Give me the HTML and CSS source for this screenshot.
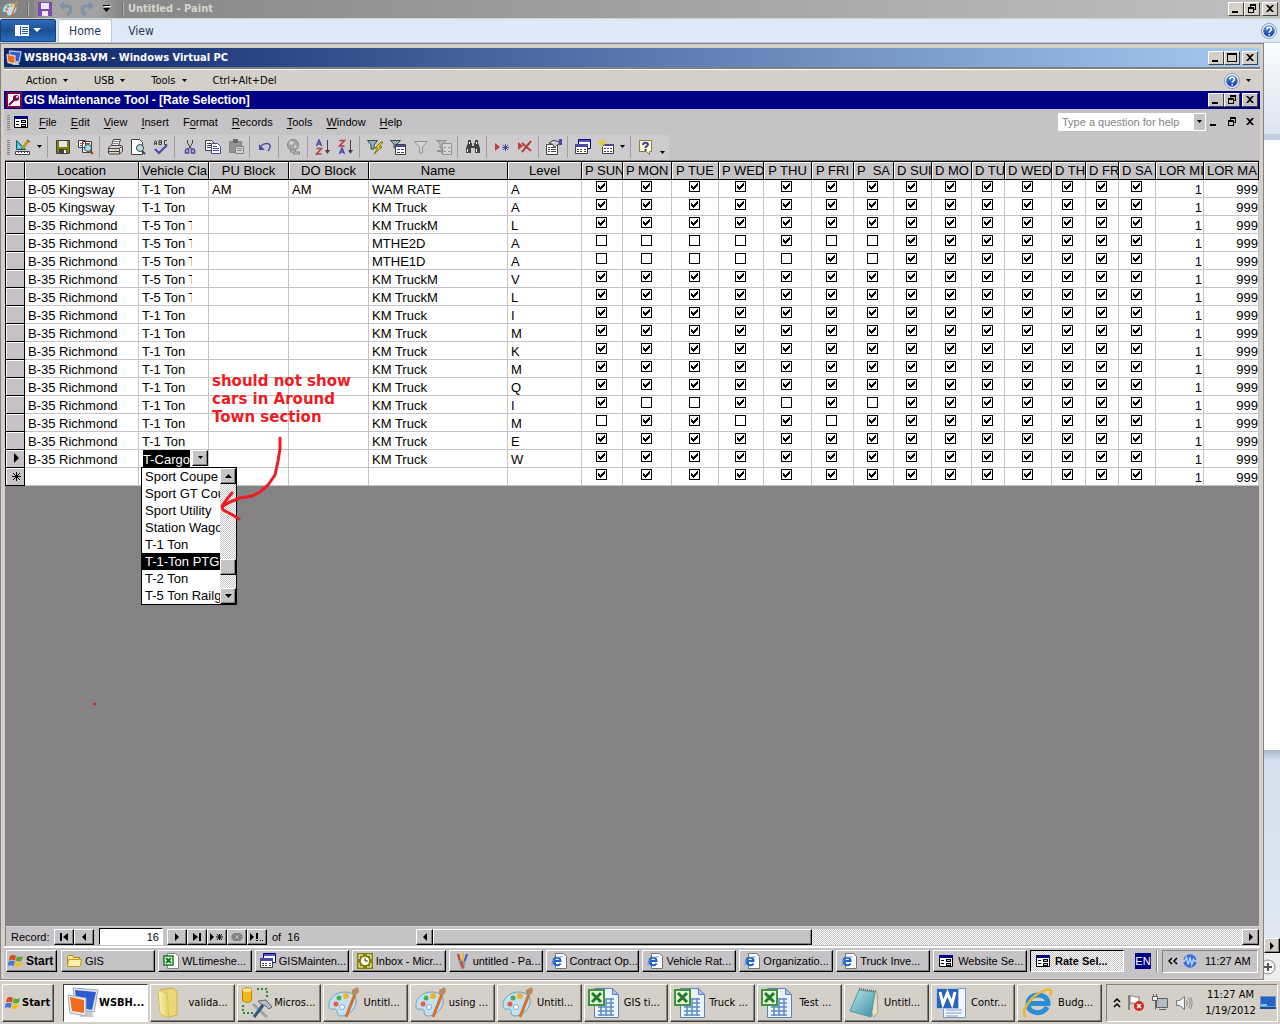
FILE: index.html
```html
<!DOCTYPE html>
<html lang="en">
<head>
<meta charset="utf-8">
<title>Untitled - Paint</title>
<link rel="stylesheet" href="styles.css">
</head>
<body>
<svg class="sprite" aria-hidden="true">
  <defs>
    <linearGradient id="gblue" x1="0" y1="0" x2="0" y2="1"><stop offset="0" stop-color="#5a92e8"/><stop offset="1" stop-color="#1238a0"/></linearGradient>
    <linearGradient id="gfold" x1="0" y1="0" x2="1" y2="0"><stop offset="0" stop-color="#fdf3b8"/><stop offset="1" stop-color="#e6cc62"/></linearGradient>
    <linearGradient id="gnote" x1="0" y1="0" x2="1" y2="1"><stop offset="0" stop-color="#b9e6ea"/><stop offset="1" stop-color="#3b8fa2"/></linearGradient>
  </defs>
  <symbol id="i-min" viewBox="0 0 12 10"><path d="M2 7h6v2H2z"/></symbol>
  <symbol id="i-max" viewBox="0 0 12 10"><path fill-rule="evenodd" d="M1 0h10v9H1zM2 2v6h8V2z"/></symbol>
  <symbol id="i-res" viewBox="0 0 12 10"><path fill-rule="evenodd" d="M4 0h6v6H8v3H2V3h2zM5 2v1h3v2h1V2zM3 5v3h4V5z"/></symbol>
  <symbol id="i-x" viewBox="0 0 12 10"><path d="M2 1h2l2 2 2-2h2L7 4.500l3 3.500H8L6 6 4 8H2l3-3.500z"/></symbol>
  <symbol id="i-down" viewBox="0 0 7 4"><path d="M1 0h5L3.500 3z"/></symbol>
  <symbol id="i-tri" viewBox="0 0 7 4"><path d="M0 0h7L3.500 4z"/></symbol>
  <symbol id="i-left" viewBox="0 0 8 8"><path d="M6 0v8L2 4z"/></symbol>
  <symbol id="i-right" viewBox="0 0 8 8"><path d="M2 0v8l4-4z"/></symbol>
  <symbol id="i-first" viewBox="0 0 12 8"><path d="M2 0h2v8H2zM10 0v8L5 4z"/></symbol>
  <symbol id="i-last" viewBox="0 0 12 8"><path d="M2 0v8l5-4zM8 0h2v8H8z"/></symbol>
  <symbol id="i-new" viewBox="0 0 14 8"><path d="M0 0v8l4-4zM6 3.500h7v1H6zM9 1h1v6H9z"/><path d="M7 1l5 6M12 1L7 7" stroke="#000"/></symbol>
  <symbol id="i-stop" viewBox="0 0 14 10"><path fill="#848284" d="M3 0h8l3 3v4l-3 3H3L0 7V3z"/><path stroke="#d6d3d6" d="M5 3l4 4M9 3L5 7" fill="none"/></symbol>
  <symbol id="i-run" viewBox="0 0 14 8"><path d="M0 0v8l4-4zM6 0h2v6H6zM6 7h2v1H6zM10 7h1v1h-1zM12 7h1v1h-1z"/></symbol>
  <symbol id="i-help" viewBox="0 0 16 16"><circle cx="8" cy="8" r="7.500" fill="#f2f4f8" stroke="#8b97b5"/><circle cx="8" cy="8" r="5.800" fill="url(#gblue)"/><path d="M5.800 6.500c0-3 4.600-3 4.600-.2 0 1.600-2.200 1.600-2.200 3.400M8.200 11v1.400" fill="none" stroke="#fff" stroke-width="1.600"/></symbol>
  <symbol id="i-palette" viewBox="0 0 32 32"><path d="M2 20C1 11 9 5 18 5c8 0 12 5 11 11-1 7-8 13-15 13-6 0-2-6-6-7-3 0-5 1-6-2z" fill="#c3e0f3" stroke="#6ba3c9"/><circle cx="9" cy="17" r="2.500" fill="#e85c3c"/><circle cx="12" cy="11" r="2.500" fill="#4eae4a"/><circle cx="19" cy="9" r="3" fill="#f3b32a"/><circle cx="15" cy="20" r="2.500" fill="#fff" stroke="#76a9d0"/><path d="M28 7l-9 23" stroke="#d8702a" stroke-width="3"/><path d="M25 3l6-3 1 5-4 4-3-2z" fill="#b78b5e"/></symbol>
  <symbol id="i-vpc" viewBox="0 0 32 32"><path d="M13 30h14l-3-6h-8z" fill="#c8ccd2"/><path d="M6 1l25 2-4 22-18-3z" fill="#e5e9f0" stroke="#9ba4b4"/><path d="M8 3l21 2-4 18-15-3z" fill="#2d5bd0"/><path d="M1 8l18 3v18L3 26z" fill="#e9edf2" stroke="#a2a6ae"/><path d="M3 10l14 3v13L5 24z" fill="#ee6b1b"/></symbol>
  <symbol id="i-key" viewBox="0 0 16 16"><path fill="#fff" stroke="#840042" stroke-width="2" d="M1 1h14v14H1z"/><path d="M3 13l6-6" stroke="#840042" stroke-width="2"/><circle cx="10" cy="6" r="3" fill="#840042"/><circle cx="11" cy="5" r="1" fill="#fff"/></symbol>
  <symbol id="i-form" viewBox="0 0 14 12"><path fill="#fff" stroke="#000" d="M.5.500h13v11H.5z"/><path fill="#000084" d="M0 0h14v3H0z"/><path d="M2 5h3v1H2zM2 8h3v1H2zM7 4h5v3H7zM7 8h5v3H7z"/><path fill="#c6c3c6" d="M8 5h3v1H8zM8 9h3v1H8z"/></symbol>
  <symbol id="i-design" viewBox="0 0 16 16"><path fill="#42c3d6" stroke="#085a6b" d="M1.500 1.500v9h9z"/><path fill="#c6c3c6" d="M3 6v3h3z"/><path fill="#fff" stroke="#424142" d="M.5 12.500h14v3H.5z"/><path stroke="#424142" d="M3.500 12v2M6.500 12v2M9.500 12v2M12.500 12v2"/><path stroke="#c39a10" stroke-width="3" d="M13 2L8 9"/><path stroke="#423010" d="M12 1l3 2M7 9l-.5 2"/></symbol>
  <symbol id="i-save" viewBox="0 0 16 16"><path fill="#848200" stroke="#424142" d="M1.500 1.500h13v13h-13z"/><path fill="#e7e3e7" d="M4 2h8v6H4z"/><path fill="#424142" d="M4 10h8v4H4z"/><path fill="#fff" d="M9 11h2v3H9z"/></symbol>
  <symbol id="i-find" viewBox="0 0 16 16"><path fill="#fff" stroke="#424142" d="M4.500 2.500h9v11h-9zM.5 1.500h7v7h-7z"/><path stroke="#c34a4a" d="M2 4.500h4M8 4.500h4"/><path stroke="#4a4aa5" d="M2 6.500h3"/><circle cx="10" cy="9" r="3.500" fill="#9ce3ef" stroke="#424142"/><path stroke="#a54100" stroke-width="2" d="M12 12l3 3"/></symbol>
  <symbol id="i-print" viewBox="0 0 16 16"><path fill="#fff" stroke="#424142" d="M6.500.500h7l-2 6h-7z"/><path stroke="#848284" d="M7 2.500h5M6 4.500h5"/><path fill="#ded7de" stroke="#424142" d="M1.500 8.500l3-2h10l1 1v5l-3 2.500h-10l-1-1z"/><path stroke="#424142" fill="none" d="M1 9.500h11l3-2M1 12.500h11M12.500 10v5"/><path stroke="#dcd000" d="M7 11.500h3"/></symbol>
  <symbol id="i-preview" viewBox="0 0 16 16"><path fill="#fff" stroke="#424142" d="M1.500.500h8l3 3v12h-11z"/><circle cx="10" cy="9" r="3.500" fill="#b5e3ea" stroke="#424142"/><path stroke="#424142" stroke-width="2" d="M12 12l3 3"/></symbol>
  <symbol id="i-spell" viewBox="0 0 16 16"><path fill="none" stroke="#424142" d="M1.500 6V3l1-1.500 1 1.500v3M1.500 4.500h2M6 1.500v4h2.500v-4zM6 3.500h2M14 1.500h-2.500v4H14"/><path d="M2 10l4 4 8-8" fill="none" stroke="#4a4aa5" stroke-width="2"/></symbol>
  <symbol id="i-cut" viewBox="0 0 16 16"><path d="M5.500 1v3l4 6M10.500 1v3l-4 6" fill="none" stroke="#424142"/><path fill="none" stroke="#4a4aa5" stroke-width="1.500" d="M4.500 10h2v4h-3v-3zM9.500 10h2l1 1v3h-3z"/></symbol>
  <symbol id="i-copy" viewBox="0 0 16 16"><path fill="#fff" stroke="#424142" d="M.5 1.500h6l3 3v7h-9z"/><path stroke="#424142" d="M2 4.500h4M2 6.500h4M2 8.500h4"/><path fill="#fff" stroke="#4a4aa5" d="M6.500 4.500h6l3 3v7h-9z"/><path stroke="#4a4aa5" d="M8 7.500h4M8 9.500h6M8 11.500h6"/></symbol>
  <symbol id="i-paste" viewBox="0 0 16 16"><path fill="#949294" stroke="#848284" d="M1.500 2.500h12v11h-12z"/><path fill="#6b696b" d="M5 0h5v4H5z"/><path fill="#d6d3d6" stroke="#848284" d="M7.500 7.500h8v7h-8z"/><path stroke="#848284" d="M9 9.500h5M9 11.500h5"/></symbol>
  <symbol id="i-undo" viewBox="0 0 16 16"><path fill="none" stroke="#4a4aa5" stroke-width="1.500" d="M4 7c4-4 10-3 9 1 0 2-1 3-2 4"/><path fill="#4a4aa5" d="M2 5v6h6z"/></symbol>
  <symbol id="i-globe" viewBox="0 0 16 16"><circle cx="7" cy="6" r="5.500" fill="#a5a2a5" stroke="#848284"/><path fill="#d6d3d6" d="M4 2l4 1-2 3-3-1zM8 6l3 1-2 3z"/><path d="M4 12h6M7 14h7" stroke="#848284" stroke-width="3"/><path d="M5 12h4M8 14h5" stroke="#d6d3d6"/></symbol>
  <symbol id="i-az" viewBox="0 0 16 16"><path fill="none" stroke="#4a4aa5" stroke-width="1.500" d="M1.500 7l2.500-6 2.500 6M2.500 5h3"/><path fill="none" stroke="#b54142" stroke-width="1.500" d="M1.500 9.500h5l-5 5.500h5"/><path d="M12.500 1v12" stroke="#424142"/><path fill="#424142" d="M10 11h5l-2.500 4z"/></symbol>
  <symbol id="i-za" viewBox="0 0 16 16"><path fill="none" stroke="#4a4aa5" stroke-width="1.500" d="M1.500 15l2.500-6 2.500 6M2.500 13h3"/><path fill="none" stroke="#b54142" stroke-width="1.500" d="M1.500 1.500h5l-5 5.500h5"/><path d="M12.500 1v12" stroke="#424142"/><path fill="#424142" d="M10 11h5l-2.500 4z"/></symbol>
  <symbol id="i-funnel" viewBox="0 0 16 16"><path fill="#d6d3d6" stroke="#949294" d="M1.500 2.500h13L9.500 8v6h-3V8z"/></symbol>
  <symbol id="i-fbolt" viewBox="0 0 16 16"><path fill="#8cb6bd" stroke="#424142" d="M.5 1.500h10L7 6v4H4V6z"/><path fill="#efe321" stroke="#737100" d="M14 3l-6 6h3l-4 6 8-7h-3l4-5z"/></symbol>
  <symbol id="i-fform" viewBox="0 0 16 16"><path fill="#8cb6bd" stroke="#424142" d="M.5 1.500h10L7 5v4H4V5z"/><path fill="#fff" stroke="#424142" d="M5.500 5.500h10v10h-10z"/><path fill="#4a4aa5" d="M6 6h9v2H6z"/><path stroke="#424142" d="M7 10.500h3M7 13.500h3M11 10.500h3M11 13.500h3"/></symbol>
  <symbol id="i-fgray" viewBox="0 0 16 16"><path fill="#b5b2b5" stroke="#949294" d="M.5 1.500h10L7 5v4H4V5z"/><path fill="#d6d3d6" stroke="#949294" d="M6.500 4.500h9v11h-9z"/><path stroke="#949294" d="M8 8.500h2M8 12.500h2M12 8.500h2M12 12.500h2"/><path fill="#949294" d="M1 11h4V9l3 3-3 3v-2H1z"/></symbol>
  <symbol id="i-bino" viewBox="0 0 16 16"><path fill="#424142" d="M3 1h3v3h1v3h2V4h1V1h3v3l2 5v5h-5V9H6v5H1V9l2-5z"/><path fill="#fff" d="M4 3h1v2H4zM11 3h1v2h-1zM2 10h1v3H2zM11 10h1v3h-1z"/></symbol>
  <symbol id="i-newrec" viewBox="0 0 16 16"><path fill="#b54142" d="M1 4v8l5-4z"/><path stroke="#4a4aa5" d="M8 8.500h7M11.500 5v7M9 6l5 5M14 6l-5 5"/></symbol>
  <symbol id="i-delrec" viewBox="0 0 16 16"><path fill="#b54142" d="M1 3v8l5-4z"/><path stroke="#b54142" stroke-width="2" d="M14 2L5 13M5 4l9 8"/></symbol>
  <symbol id="i-props" viewBox="0 0 16 16"><path fill="#fff" stroke="#424142" d="M.5 5.500h11v10H.5z"/><path stroke="#424142" d="M2 8.500h2M5 8.500h5M2 10.500h2M5 10.500h5M2 12.500h2M5 12.500h5"/><path fill="#d6d3d6" stroke="#424142" d="M3 4l4-2.500 6 1v3l-3 1-2 2-1-3z"/><path fill="#4a4aa5" d="M13 0h3v6h-3z"/></symbol>
  <symbol id="i-db" viewBox="0 0 16 16"><path fill="#fff" stroke="#000084" d="M3.500.500h12v9h-12z"/><path fill="#5a5ab5" d="M4 1h11v2H4z"/><path fill="#fff" stroke="#424142" d="M.5 5.500h12v9H.5z"/><path fill="#4a4aa5" d="M0 5h13v3H0z"/><path stroke="#424142" d="M2 10.500h2M5 10.500h2M9 10.500h2M2 12.500h2M5 12.500h2M9 12.500h2"/></symbol>
  <symbol id="i-newobj" viewBox="0 0 16 16"><path fill="#fff" stroke="#424142" d="M4.500 5.500h11v9h-11z"/><path fill="#4a4aa5" d="M5 5h11v2H5z"/><path stroke="#424142" d="M6 9.500h2M9 9.500h2M12 9.500h2M6 12.500h2M9 12.500h2M12 12.500h2"/><path stroke="#dfcf10" d="M4.500 0v8M0 4.500h8M1 1l6 6M7 1L1 7"/></symbol>
  <symbol id="i-q" viewBox="0 0 16 16"><path fill="#ffffce" stroke="#848242" d="M1.500 1.500h12v11h-2v3l-3-3h-7z"/><path fill="none" stroke="#3a3ab0" stroke-width="2" d="M5 6c0-3 5-3 5-.5C10 7 7.500 7 7.500 9M7.500 10v2"/></symbol>
  <symbol id="i-flag" viewBox="0 0 16 16"><path fill="#e04a20" d="M2 3c2-1.500 4-1.500 6 0L7 7.500c-2-1-4-1-6 0z"/><path fill="#56ab35" d="M9 3.300c2 1 4 1 6-.3l-1.200 4.500c-2 1.200-4 1-6 .2z"/><path fill="#3a7ade" d="M.8 8.500c2-1.200 4-1 6 0L5.500 13c-2-1-4-1-6 0z"/><path fill="#f6bd1b" d="M7.600 8.800c2 1 4 1 6 0l-1.200 4.400c-2 1.200-4 1-6 .1z"/></symbol>
  <symbol id="i-folder" viewBox="0 0 16 16"><path fill="#fbe48b" stroke="#b8860b" d="M1.500 3.500l1-1h4l1 2h6v9h-12z"/><path fill="#fdf0a8" stroke="#c9991c" d="M1.500 13.500l1-7h13l-1.500 7z"/></symbol>
  <symbol id="i-xls" viewBox="0 0 16 16"><path fill="#fff" stroke="#848284" d="M4.500.500h8l3 3v12h-11z"/><path fill="#fff" stroke="#0c7c1c" stroke-width="1.500" d="M1 3h9v9H1z"/><path stroke="#0c7c1c" stroke-width="2" d="M3 5l5 5M8 5l-5 5"/></symbol>
  <symbol id="i-outlook" viewBox="0 0 16 16"><path fill="#848200" d="M0 0h16v16H0z"/><path fill="none" stroke="#fff" d="M2 6V2h4M10 2h4v4M14 10v4h-4M6 14H2v-4"/><circle cx="8" cy="8" r="4" fill="#fff"/><path stroke="#424100" fill="none" d="M8 5v3h3"/></symbol>
  <symbol id="i-brushes" viewBox="0 0 16 16"><path stroke="#c33b21" stroke-width="2" d="M4 1l3 11"/><path stroke="#3656c8" stroke-width="2" d="M13 1l-4 12"/><path stroke="#f0b719" stroke-width="2" d="M9 0L8 12"/><path fill="#8aa6a0" d="M4 7l8 1-2 8H7z"/><path stroke="#e23a2a" stroke-width="2" d="M7 8l2 7"/></symbol>
  <symbol id="i-iepage" viewBox="0 0 16 16"><path fill="#fff" stroke="#737573" d="M4.500.500h8l3 3v12h-11z"/><path fill="none" stroke="#1c63cf" stroke-width="2" d="M9.500 10.500c-1.500 3-7 2-7-2.500s7-4.500 7 0H3"/><path fill="none" stroke="#5aa0ea" d="M1 13C0 9 6 3 11 4"/></symbol>
  <symbol id="i-folderbig" viewBox="0 0 32 32"><path fill="#edd676" stroke="#c9ad4e" d="M6 3l12-2 5 3v24l-8 2z"/><path fill="url(#gfold)" stroke="#d8bf62" d="M4 3l9 3 2 25-9-4z"/></symbol>
  <symbol id="i-tools" viewBox="0 0 32 32"><path fill="#f2b91c" stroke="#b78208" d="M1.500 3c0-3 9-3 9 0v10c0 3-9 3-9 0z"/><ellipse cx="6" cy="3" rx="4.500" ry="1.800" fill="#fbe79a"/><path fill="none" stroke="#2c8a34" stroke-width="2" stroke-dasharray="2 2" d="M16 2h10v10M2 18v8h12"/><path stroke="#9aa3ad" stroke-width="3" d="M12 17l14 13"/><path stroke="#31567f" stroke-width="3" d="M22 18L13 30"/><path fill="#b7bec7" stroke="#5c646e" d="M17 14l8-1 6 7-3 2-3-3-5-2z"/></symbol>
  <symbol id="i-xlbig" viewBox="0 0 32 32"><path fill="#eaf2fc" stroke="#5d82b8" d="M6.500 1.500h18l6 6v23h-24z"/><path fill="#a8c4ea" stroke="#5d82b8" d="M24.500 1.500v6h6z"/><path stroke="#5d8bc8" stroke-width="1.500" fill="none" d="M10 20h16M10 24h16M10 28h16M13 17v12M18 11v18M23 11v18M18 12h8M18 16h8"/><path fill="#e5f2df" stroke="#3f9637" stroke-width="2" d="M1 3h15v15H1z"/><path stroke="#247a26" stroke-width="3" d="M4 6l9 9M13 6l-9 9"/></symbol>
  <symbol id="i-notebig" viewBox="0 0 32 32"><path fill="#e9e2c0" stroke="#a8a284" d="M11 3l18 2 1 20-4 5z"/><path fill="url(#gnote)" stroke="#4d99a8" d="M11 3l16 2-4 25-21-6z"/><path stroke="#6c7478" stroke-dasharray="1 1" stroke-width="2" d="M11 2l17 2"/></symbol>
  <symbol id="i-wordbig" viewBox="0 0 32 32"><path fill="#f4f8fd" stroke="#7a97c5" d="M8.500 1.500h22v29h-22z"/><path stroke="#9fb7da" stroke-width="1.500" d="M11 23h16M11 26h16M11 29h12"/><path fill="#2b63ba" stroke="#a9c5ee" d="M1.500 1.500h22v20h-22z"/><path fill="none" stroke="#fff" stroke-width="3" d="M5 5l3 12 4.500-11L17 17l3-12"/></symbol>
  <symbol id="i-iebig" viewBox="0 0 32 32"><path fill="none" stroke="#2a8ed2" stroke-width="5" d="M26 20c-3 8-19 8-19-3 0-12 20-12 20-.5H8"/><path fill="none" stroke="#f0b52b" stroke-width="2.500" d="M5 30c-6-4 3-19 15-25 9-5 12-2 9 4"/></symbol>
  <symbol id="i-up2" viewBox="0 0 8 12"><path fill="none" stroke="#000" stroke-width="1.500" d="M1 5l3-3 3 3M1 10l3-3 3 3"/></symbol>
  <symbol id="i-lt2" viewBox="0 0 10 8"><path fill="none" stroke="#000" stroke-width="1.500" d="M4 1L1 4l3 3M9 1L6 4l3 3"/></symbol>
  <symbol id="i-wave" viewBox="0 0 18 16"><circle cx="9" cy="8" r="7.500" fill="#3e6de0"/><path fill="none" stroke="#b9dcff" stroke-width="1.500" d="M0 8h3l2-4 2 8 2-8 2 8 2-6 1 2h4"/></symbol>
  <symbol id="i-actflag" viewBox="0 0 18 18"><path stroke="#6b6b6b" stroke-width="1.500" d="M2 1v15"/><path fill="#fff" stroke="#777" d="M3 2.500c3-2 5 2 9 0v7c-4 2-6-2-9 0z"/><circle cx="12" cy="12" r="5" fill="#d9291f"/><path stroke="#fff" stroke-width="1.500" d="M10 10l4 4M14 10l-4 4"/></symbol>
  <symbol id="i-net" viewBox="0 0 18 18"><path fill="#b8bcc2" stroke="#5f6265" d="M5.500 4.500h11v9h-11z"/><path fill="#eceded" stroke="#5f6265" d="M1.500 2.500h5v4h-5z"/><path stroke="#5f6265" d="M2.500 0v3M5.500 0v3M4.500 7v8.500M8 15.500h7"/></symbol>
  <symbol id="i-sound" viewBox="0 0 18 18"><path fill="#f0f0f0" stroke="#777" d="M1.500 6.500h3l5-4v13l-5-4h-3z"/><path fill="none" stroke="#888" d="M11.500 6c1 2 1 4 0 6M13.500 4c2 3 2 7 0 10M15.500 3c2 4 2 8 0 12"/></symbol>
  <symbol id="i-desk" viewBox="0 0 16 14"><path fill="#2762c4" stroke="#6f94c8" d="M.5.500h15v10H.5z"/><path fill="#7cc7ef" d="M1 8h6v2H1z"/><path fill="#1f4d90" d="M0 11h16v2H0z"/></symbol>
</svg>

<header class="paint-title">
  <svg class="ic16"><use href="#i-palette"/></svg>
  <i class="pt-sep"></i>
  <div class="quick">
  <button aria-label="Save"><svg viewBox="0 0 16 16" class="ic16"><path fill="#7a4bb0" d="M1 1h14v14H1z"/><path fill="#efe9f8" d="M4 2h8v6H4zM5 10h6v5H5z"/></svg></button>
  <button aria-label="Undo"><svg viewBox="0 0 16 16" class="ic16"><path fill="none" stroke="#7f90a8" stroke-width="3" d="M4 5h5c5 0 5 6 0 9"/><path fill="#7f90a8" d="M6 0v9L1 5z"/></svg></button>
  <button aria-label="Redo"><svg viewBox="0 0 16 16" class="ic16"><path fill="none" stroke="#7f90a8" stroke-width="3" d="M12 5H7c-5 0-5 6 0 9"/><path fill="#7f90a8" d="M10 0v9l5-4z"/></svg></button>
  <button aria-label="Customize"><svg viewBox="0 0 9 8" class="ic9"><path fill="#fff" d="M1 1h7v1H1z"/><path d="M0 0h7v1H0zM0 3h7L3.500 7z"/></svg></button>
  </div>
  <i class="pt-sep tight"></i>
  <h1>Untitled - Paint</h1>
  <div class="wbtns"><button aria-label="Minimize"><svg><use href="#i-min"/></svg></button><button aria-label="Restore"><svg><use href="#i-res"/></svg></button><button class="gap" aria-label="Close"><svg><use href="#i-x"/></svg></button></div>
</header>
<nav class="ribbon">
  <button class="appbtn" aria-label="Paint menu"><svg viewBox="0 0 26 12"><path fill="#fff" d="M0 0h14v11H0z"/><path fill="#2a5fa8" d="M5 1h1v9H5zM7 2h6v1H7zM7 4h6v1H7zM7 6h6v1H7zM7 8h6v1H7z"/><path fill="#fff" d="M18 3h8l-4 4z"/></svg></button>
  <button class="tab on">Home</button>
  <button class="tab">View</button>
  <button class="rhelp" aria-label="Help"><svg class="ic16"><use href="#i-help"/></svg></button>
</nav>

<div class="work">
<main class="vm">
  <div class="vm-title">
    <svg class="ic16"><use href="#i-vpc"/></svg><h2>WSBHQ438-VM - Windows Virtual PC</h2>
    <div class="wbtns"><button aria-label="Minimize"><svg><use href="#i-min"/></svg></button><button aria-label="Maximize"><svg><use href="#i-max"/></svg></button><button class="gap" aria-label="Close"><svg><use href="#i-x"/></svg></button></div>
  </div>
  <div class="vm-menu">
    <button>Action<svg class="dn"><use href="#i-down"/></svg></button><button>USB<svg class="dn"><use href="#i-down"/></svg></button><button>Tools<svg class="dn"><use href="#i-down"/></svg></button><button>Ctrl+Alt+Del</button>
    <button class="push" aria-label="Help"><svg class="ic16"><use href="#i-help"/></svg><svg class="dn"><use href="#i-down"/></svg></button>
  </div>
  <div class="app-title">
    <svg class="ic16"><use href="#i-key"/></svg><h2>GIS Maintenance Tool - [Rate Selection]</h2>
    <div class="wbtns guest"><button aria-label="Minimize"><svg><use href="#i-min"/></svg></button><button aria-label="Restore"><svg><use href="#i-res"/></svg></button><button class="gap" aria-label="Close"><svg><use href="#i-x"/></svg></button></div>
  </div>
  <div class="menu">
    <i class="grip"></i><svg class="ficon"><use href="#i-form"/></svg>
    <button><u>F</u>ile</button><button><u>E</u>dit</button><button><u>V</u>iew</button><button><u>I</u>nsert</button><button>F<u>o</u>rmat</button><button><u>R</u>ecords</button><button><u>T</u>ools</button><button><u>W</u>indow</button><button><u>H</u>elp</button>
    <div class="ask"><input type="text" aria-label="Type a question for help" placeholder="Type a question for help"><button aria-label="Recent questions"><svg class="dn"><use href="#i-down"/></svg></button></div>
    <div class="mdi"><button aria-label="Minimize form"><svg><use href="#i-min"/></svg></button><button aria-label="Restore form"><svg><use href="#i-res"/></svg></button><button aria-label="Close form"><svg><use href="#i-x"/></svg></button></div>
  </div>
  <div class="tools">
    <i class="grip"></i>
    <button aria-label="Design view"><svg><use href="#i-design"/></svg></button><button class="thin" aria-label="Views"><svg class="dn"><use href="#i-down"/></svg></button><i></i>
    <button aria-label="Save"><svg><use href="#i-save"/></svg></button><button aria-label="File search"><svg><use href="#i-find"/></svg></button><i></i>
    <button aria-label="Print"><svg><use href="#i-print"/></svg></button><button aria-label="Print preview"><svg><use href="#i-preview"/></svg></button><button aria-label="Spelling"><svg><use href="#i-spell"/></svg></button><i></i>
    <button aria-label="Cut"><svg><use href="#i-cut"/></svg></button><button aria-label="Copy"><svg><use href="#i-copy"/></svg></button><button aria-label="Paste"><svg><use href="#i-paste"/></svg></button><i></i>
    <button aria-label="Undo"><svg><use href="#i-undo"/></svg></button><i></i>
    <button aria-label="Insert hyperlink"><svg><use href="#i-globe"/></svg></button><i></i>
    <button aria-label="Sort ascending"><svg><use href="#i-az"/></svg></button><button aria-label="Sort descending"><svg><use href="#i-za"/></svg></button><i></i>
    <button aria-label="Filter by selection"><svg><use href="#i-fbolt"/></svg></button><button aria-label="Filter by form"><svg><use href="#i-fform"/></svg></button><button aria-label="Apply filter"><svg><use href="#i-funnel"/></svg></button><button aria-label="Toggle filter"><svg><use href="#i-fgray"/></svg></button><i></i>
    <button aria-label="Find"><svg><use href="#i-bino"/></svg></button><i></i>
    <button aria-label="New record"><svg><use href="#i-newrec"/></svg></button><button aria-label="Delete record"><svg><use href="#i-delrec"/></svg></button><i></i>
    <button aria-label="Properties"><svg><use href="#i-props"/></svg></button><i></i>
    <button aria-label="Database window"><svg><use href="#i-db"/></svg></button><button aria-label="New object"><svg><use href="#i-newobj"/></svg></button><button class="thin" aria-label="New object list"><svg class="dn"><use href="#i-down"/></svg></button><i></i>
    <button aria-label="Help"><svg><use href="#i-q"/></svg></button><button class="thin low" aria-label="Toolbar options"><svg class="dn"><use href="#i-down"/></svg></button>
  </div>
  <section class="sheet">
    <table>
      <colgroup><col class="w20"><col class="w114"><col class="w70"><col class="w80"><col class="w80"><col class="w139"><col class="w74"><col class="w41"><col class="w49"><col class="w47"><col class="w45"><col class="w48"><col class="w42"><col class="w40"><col class="w38"><col class="w40"><col class="w33"><col class="w47"><col class="w34"><col class="w33"><col class="w37"><col class="w48"><col></colgroup>
      <thead><tr><th></th><th>Location</th><th class="cut">Vehicle Cla</th><th>PU Block</th><th>DO Block</th><th>Name</th><th>Level</th><th class="cut">P SUN</th><th class="cut">P MON</th><th>P TUE</th><th class="cut">P WED</th><th>P THU</th><th>P FRI</th><th class="cut">P &nbsp;SA</th><th class="cut">D SUI</th><th class="cut">D MO</th><th class="cut">D TU</th><th class="cut">D WED</th><th class="cut">D TH</th><th class="cut">D FR</th><th class="cut">D SA</th><th class="cut">LOR MI</th><th class="cut">LOR MA</th></tr></thead>
      <tbody id="rows"></tbody>
    </table>
    <p class="note">should not show<br>cars in Around<br>Town section</p>
    <svg class="arrow" viewBox="0 0 24 86"><path d="M64 3L64 14L62 26L59 40L52 50L44 57L36 61L24 63L14 67L7 71M16 58L11 64L6 71L7 75L15 79L23 84"/></svg>
    <i class="dot"></i>
  </section>
  <div class="recnav">
    <span class="lab">Record:</span>
    <button aria-label="First record"><svg><use href="#i-first"/></svg></button><button aria-label="Previous record"><svg><use href="#i-left"/></svg></button>
    <input type="text" value="16" aria-label="Record number">
    <button aria-label="Next record"><svg><use href="#i-right"/></svg></button><button aria-label="Last record"><svg><use href="#i-last"/></svg></button><button aria-label="New record"><svg><use href="#i-new"/></svg></button><button aria-label="Cancel query"><svg><use href="#i-stop"/></svg></button><button aria-label="Run"><svg><use href="#i-run"/></svg></button>
    <span class="of">of&nbsp; 16</span>
    <div class="hscroll"><button aria-label="Scroll left"><svg><use href="#i-left"/></svg></button><div class="thumb"></div><div class="track"></div><button aria-label="Scroll right"><svg><use href="#i-right"/></svg></button></div>
  </div>
  <div class="gbar">
    <button class="start"><svg class="ic16"><use href="#i-flag"/></svg>Start</button>
    <div class="gtasks">
      <button><svg><use href="#i-folder"/></svg>GIS</button><button><svg><use href="#i-xls"/></svg>WLtimeshe...</button><button><svg><use href="#i-db"/></svg>GISMainten...</button><button><svg><use href="#i-outlook"/></svg>Inbox - Micr...</button><button><svg><use href="#i-brushes"/></svg>untitled - Pa...</button><button><svg><use href="#i-iepage"/></svg>Contract Op...</button><button><svg><use href="#i-iepage"/></svg>Vehicle Rat...</button><button><svg><use href="#i-iepage"/></svg>Organizatio...</button><button><svg><use href="#i-iepage"/></svg>Truck Inve...</button><button><svg class="fm"><use href="#i-form"/></svg>Website Se...</button><button class="on"><svg class="fm"><use href="#i-form"/></svg>Rate Sel...</button>
    </div>
    <span class="lang">EN</span><i class="vsep"></i>
    <div class="gtray"><svg class="lt2"><use href="#i-lt2"/></svg><svg class="ic16"><use href="#i-wave"/></svg><time>11:27 AM</time></div>
  </div>
</main>
<aside class="behind">
  <div class="b1"></div><div class="b2"></div><div class="b3"></div><div class="b4"></div>
  <button aria-label="Scroll right"><svg><use href="#i-right"/></svg></button>
  <div class="b5"><svg viewBox="0 0 16 16" class="ic16"><circle cx="4" cy="8" r="7" fill="#f4f4f4" stroke="#8a8a8a"/><path stroke="#555" stroke-width="2" d="M0 8h8M4 4v8"/></svg></div>
</aside>
</div>

<footer class="hbar">
  <button class="start"><svg class="ic16"><use href="#i-flag"/></svg>Start</button>
  <div class="htasks">
    <button class="on"><svg><use href="#i-vpc"/></svg><span>WSBH...</span></button><button><svg><use href="#i-folderbig"/></svg><span>valida...</span></button><button><svg><use href="#i-tools"/></svg><span>Micros...</span></button><button><svg><use href="#i-palette"/></svg><span>Untitl...</span></button><button><svg><use href="#i-palette"/></svg><span>using ...</span></button><button><svg><use href="#i-palette"/></svg><span>Untitl...</span></button><button><svg><use href="#i-xlbig"/></svg><span>GIS ti...</span></button><button><svg><use href="#i-xlbig"/></svg><span>Truck ...</span></button><button><svg><use href="#i-xlbig"/></svg><span>Test ...</span></button><button><svg><use href="#i-notebig"/></svg><span>Untitl...</span></button><button><svg><use href="#i-wordbig"/></svg><span>Contr...</span></button><button><svg><use href="#i-iebig"/></svg><span>Budg...</span></button>
  </div>
  <div class="htray"><svg class="up2"><use href="#i-up2"/></svg><svg class="ic18"><use href="#i-actflag"/></svg><svg class="ic18"><use href="#i-net"/></svg><svg class="ic18"><use href="#i-sound"/></svg><time>11:27 AM<br>1/19/2012</time><svg class="desk"><use href="#i-desk"/></svg></div>
</footer>
<script src="rates.js"></script>
</body>
</html>
```

FILE: styles.css
```css
* { box-sizing: border-box; }
body { margin: 0; min-height: 100vh; display: flex; flex-direction: column; background: #d4d0c8; color: #000; font: 11px/14px "DejaVu Sans Condensed", "DejaVu Sans", sans-serif; overflow-x: hidden; }
button, input, select { font: inherit; color: inherit; margin: 0; padding: 0; border: 0; border-radius: 0; background: none; white-space: nowrap; }
h1, h2, p { margin: 0; font-size: 11px; line-height: 14px; white-space: nowrap; }
svg { display: block; flex: none; }
.sprite { position: absolute; width: 0; height: 0; }
.ic16 { width: 16px; height: 16px; }
.ic18 { width: 18px; height: 18px; }
.ic9 { width: 9px; height: 8px; }
.dn { width: 7px; height: 4px; }

.paint-title { height: 19px; display: flex; align-items: center; padding: 0 2px; background: linear-gradient(90deg, #828282, #c0c0c0); border-bottom: 1px solid #d4d0c8; }
.paint-title h1 { color: #d8d4cc; }
.pt-sep { width: 2px; height: 14px; margin: 0 5px 0 9px; border-left: 1px solid #6b6b6b; border-right: 1px solid #b0b0b0; }
.pt-sep.tight { margin: 0 4px; }
.quick { display: flex; align-self: stretch; background: linear-gradient(90deg, #8a8a8a, #a2a2a2 20px, #a2a2a2 64px, #8a8a8a); }
.quick button { width: 21px; display: flex; align-items: center; justify-content: center; }
.wbtns { margin-left: auto; display: flex; }
.wbtns button { width: 16px; height: 14px; display: flex; align-items: center; justify-content: center; background: #d4d0c8; border: 1px solid; border-color: #fff #404040 #404040 #fff; }
.wbtns.guest button { background: #c6c3c6; }
.wbtns svg, .mdi svg { width: 12px; height: 10px; }
.wbtns .gap { margin-left: 2px; }

.ribbon { height: 24px; display: flex; align-items: stretch; background: #dfe9f5; border-bottom: 1px solid #b6cae2; color: #1e395b; font-size: 12px; }
.appbtn { width: 56px; display: flex; align-items: center; justify-content: center; background: linear-gradient(#2f6cb5, #1d4f93 50%, #2a6fc0); border: 1px solid #1c4076; border-radius: 2px 2px 0 0; }
.appbtn svg { width: 26px; height: 12px; }
.tab { width: 54px; margin-left: 2px; border-radius: 3px 3px 0 0; }
.tab.on { background: #fff; border: 1px solid #b6cae2; border-bottom: 0; }
.rhelp { margin: 0 3px 0 auto; display: flex; align-items: center; }

.work { flex: 1; display: flex; }
.vm { flex: 1; min-width: 0; display: flex; flex-direction: column; background: #d4d0c8; border: solid #d4d0c8; border-width: 4px 2px 2px 2px; outline: 1px solid #848284; outline-offset: -1px; padding: 1px 2px 0 2px; }
.vm-title { height: 19px; display: flex; align-items: center; gap: 2px; padding: 0 2px; background: linear-gradient(90deg, #0a246a, #a6caf0); color: #fff; }
.vm-menu { height: 24px; display: flex; align-items: center; gap: 25px; padding: 1px 8px 0 22px; border-top: 2px solid #808080; box-shadow: inset 0 1px #fff; }
.vm-menu button { display: flex; align-items: center; gap: 5px; }
.push.push { margin-left: auto; }
.app-title { height: 18px; display: flex; align-items: center; gap: 2px; padding: 0 2px; background: #000084; color: #fff; }
.app-title h2 { font-family: "Liberation Sans", Arial, sans-serif; font-size: 12px; }
.menu, .tools, .recnav, .gbar { font-family: "Liberation Sans", Arial, sans-serif; background: #c6c3c6; }
.menu { height: 26px; display: flex; align-items: center; padding: 0 3px; }
.menu > button { padding: 0 7px; }
.menu u { text-underline-offset: 2px; }
.grip { width: 3px; height: 15px; margin: 0 4px 0 0; background: repeating-linear-gradient(#848284 0 1px, #c6c3c6 1px 2px); }
.ficon { width: 14px; height: 12px; margin-right: 4px; }
.ask { margin-left: auto; width: 148px; height: 18px; display: flex; background: #fff; padding: 1px; }
.ask input { flex: 1; min-width: 0; padding: 0 3px; }
.ask input::placeholder { color: #848284; opacity: 1; }
.ask button { width: 11px; display: flex; align-items: center; justify-content: center; background: #c6c3c6; }
.mdi { display: flex; gap: 4px; margin-left: 1px; }
.mdi button { width: 14px; display: flex; justify-content: center; }
.tools { height: 25px; width: 100%; display: flex; align-items: center; padding: 0 3px 1px; background: linear-gradient(90deg, #cecbce 665px, #c6c3c6 665px); }
.tools .grip { margin-right: 1px; }
.tools button { width: 23px; height: 22px; display: flex; align-items: center; justify-content: center; }
.tools button svg { width: 16px; height: 16px; }
.tools button .dn, .dn.dn { width: 7px; height: 4px; }
.tools .thin { width: 11px; }
.tools .low { align-items: flex-end; padding-bottom: 3px; }
.tools > i:not(.grip) { width: 1px; height: 22px; margin: 0 3px 0 2px; background: #a09ea0; }

.sheet { flex: 1; position: relative; margin: 0 1px; background: #848284; border-top: 1px solid #848284; }
table { width: 100%; table-layout: fixed; border-collapse: separate; border-spacing: 0; font: 13px/16px "Liberation Sans", Arial, sans-serif; background: #fff; }
th { height: 19px; padding: 0 2px; background: #c6c3c6; font-weight: 400; white-space: nowrap; overflow: hidden; border: solid #000; border-width: 1px 1px 1px 0; box-shadow: inset 1px 1px #fff; }
th.cut { text-align: left; padding: 0 0 0 3px; }
th:first-child, .rh { border-left: 1px solid #000; }
td { height: 18px; padding: 2px 3px 0; line-height: 15px; white-space: nowrap; overflow: hidden; border: solid #c6c3c6; border-width: 0 1px 1px 0; }
td.rh { padding: 0 5px; background: #c6c3c6; border-color: #000; box-shadow: inset 1px 1px #fff; }
td.rh svg { width: 11px; height: 11px; }
td.num { text-align: right; padding: 2px 1px 0; }
td.num:last-child { padding-right: 0; }
td.chk { padding: 1px 2px 0 0; line-height: 0; text-align: center; vertical-align: top; }
td.chk input { appearance: none; width: 11px; height: 11px; border: 1px solid #000; background: #fff; }
td.chk input:checked { background: #fff url("data:image/svg+xml,%3Csvg xmlns='http://www.w3.org/2000/svg' width='9' height='9'%3E%3Cpath d='M1 3h1v1h1v1h1V4h1V3h1V2h1V1h1v3H7v1H6v1H5v1H4v1H3V7H2V6H1z'/%3E%3C/svg%3E") no-repeat; }
.clip { display: block; width: 50px; overflow: hidden; }
td.combo { position: relative; overflow: visible; padding: 0 0 0 4px; }
.edit { display: flex; gap: 2px; height: 17px; }
.edit input { width: 47px; padding-top: 1px; background: #000; color: #fff; }
.edit button { width: 16px; height: 16px; display: flex; align-items: center; justify-content: center; }
.edit button, .list button, .list b, .recnav button, .thumb, .gbar button, .behind button { background: #c6c3c6; border: 1px solid; border-color: #fff #000 #000 #fff; box-shadow: inset -1px -1px #848284; }
.list { position: absolute; z-index: 2; left: 2px; top: 17px; display: flex; width: 96px; border: 1px solid #000; background: #fff; }
.list select { appearance: none; width: 78px; height: 136px; overflow: hidden; outline: 0; scrollbar-width: none; }
.list option { height: 17px; min-height: 17px; padding: 1px 0 0 3px; line-height: 16px; }
.list option:checked { background: #000 linear-gradient(#000, #000); color: #fff; }
.bar { flex: 1; display: flex; flex-direction: column; }
.bar, .track, .gbar .on { background: repeating-conic-gradient(#fff 0 25%, #c6c3c6 0 50%) 0 0 / 2px 2px; }
.list button { height: 16px; display: flex; align-items: center; justify-content: center; }
.list b { height: 16px; margin: auto 0 13px; }
.flip { transform: rotate(180deg); }
.note { position: absolute; left: 207px; top: 211px; font: bold 15px/18px "DejaVu Sans", Verdana, sans-serif; color: #ed1c24; }
.arrow { position: absolute; z-index: 3; left: 211px; top: 274px; width: 24px; height: 86px; overflow: visible; fill: none; stroke: #ed1c24; stroke-width: 3; stroke-linejoin: round; stroke-linecap: round; }
.dot { position: absolute; left: 88px; top: 542px; width: 3px; height: 2px; background: #ed1c24; }

.recnav { height: 20px; display: flex; align-items: center; margin: 0 1px; padding-left: 5px; border-left: 1px solid #848284; border-top: 1px solid #d6d3d6; }
.recnav button, .hscroll .thumb { height: 16px; display: flex; align-items: center; justify-content: center; }
.recnav button { width: 20px; }
.recnav button svg { width: 14px; height: 8px; }
.recnav input { width: 64px; height: 17px; margin: 0 4px 0 5px; padding-right: 3px; text-align: right; background: #fff; border: 1px solid; border-color: #000 #fff #fff #000; }
.lab { width: 43px; }
.of { width: 149px; padding-left: 5px; }
.hscroll { flex: 1; display: flex; }
.hscroll .thumb { flex: 378; }
.hscroll .track { flex: 431; }
.hscroll button { width: 17px; flex: none; }
.gbar { display: flex; align-items: center; height: 32px; padding: 0 2px 4px; border-top: 2px solid #fff; }
.gbar button { height: 22px; display: flex; align-items: center; gap: 3px; padding: 0 4px; overflow: hidden; }
.gbar .start { width: 51px; font-weight: 700; font-size: 12px; gap: 2px; padding: 0 1px; }
.gtasks { flex: 1; min-width: 0; display: flex; gap: 3px; margin: 0 11px 0 4px; }
.gtasks button { flex: 1 1 0; min-width: 0; }
.gtasks svg { width: 16px; height: 16px; }
.gtasks .fm { width: 14px; height: 12px; margin: 0 2px 0 1px; }
.gbar .on { font-weight: 700; border-color: #000 #fff #fff #000; box-shadow: none; }
.lang { padding: 1px 0; width: 16px; background: #000084; color: #fff; text-align: center; }
.vsep { width: 2px; height: 22px; margin: 0 4px 0 5px; border-left: 1px solid #848284; border-right: 1px solid #fff; }
.gtray { width: 96px; height: 23px; display: flex; align-items: center; gap: 4px; padding: 0 5px; border: 1px solid; border-color: #848284 #fff #fff #848284; }
.gtray time { margin-left: 3px; white-space: nowrap; }
.lt2 { width: 10px; height: 8px; }

.behind { width: 16px; display: flex; flex-direction: column; background: #fff; }
.b1 { height: 91px; background: linear-gradient(#fafcfe, #dbe5f2); }
.b2 { height: 6px; background: #c3cee0; }
.b3 { flex: 610; }
.b4 { flex: 188; background: linear-gradient(#a5b5c9, #d3dfee 10px, #dfe8f3); }
.behind button { height: 15px; background: #d4d0c8; display: flex; align-items: center; justify-content: center; }
.behind button svg { width: 8px; height: 8px; }
.b5 { height: 27px; background: #eeeeec; display: flex; align-items: center; }

.hbar { height: 44px; display: flex; align-items: center; padding: 1px 2px 0; border-top: 1px solid #fff; }
.hbar button { height: 38px; display: flex; align-items: center; background: #d4d0c8; border: 1px solid; border-color: #fff #404040 #404040 #fff; box-shadow: inset -1px -1px #808080; overflow: hidden; }
.hbar .start { width: 52px; padding: 0 2px; gap: 1px; font-weight: 700; }
.htasks { flex: 1; min-width: 0; display: flex; gap: 2px; margin: 0 4px 0 9px; }
.htasks button { flex: 1 1 0; min-width: 0; padding: 0 3px; }
.htasks svg { width: 32px; height: 32px; }
.htasks span { flex: 1; text-align: center; }
.htasks .on { background: #fff; font-weight: 700; border-color: #404040 #fff #fff #404040; box-shadow: none; }
.htray { width: 172px; height: 38px; display: flex; align-items: center; gap: 6px; padding: 0 1px 0 6px; border: 1px solid; border-color: #808080 #fff #fff #808080; }
.htray time { margin: 0 -4px 0 4px; flex: 1; text-align: center; line-height: 16px; white-space: nowrap; }
.up2 { width: 8px; height: 12px; }
.desk { width: 16px; height: 14px; }

.w20 { width: 20px; } .w33 { width: 33px; } .w34 { width: 34px; } .w37 { width: 37px; } .w38 { width: 38px; }
.w40 { width: 40px; } .w41 { width: 41px; } .w42 { width: 42px; } .w45 { width: 45px; } .w47 { width: 47px; }
.w48 { width: 48px; } .w49 { width: 49px; } .w70 { width: 70px; } .w74 { width: 74px; } .w80 { width: 80px; }
.w114 { width: 114px; } .w139 { width: 139px; }
```

FILE: rates.js
```js
// location | vehicle class | PU block | DO block | name | level | pickup days SUN..SAT
const rates = [
  "B-05 Kingsway|T-1 Ton|AM|AM|WAM RATE|A|1111111",
  "B-05 Kingsway|T-1 Ton|||KM Truck|A|1111111",
  "B-35 Richmond|T-5 Ton T|||KM TruckM|L|1111111",
  "B-35 Richmond|T-5 Ton T|||MTHE2D|A|0000100",
  "B-35 Richmond|T-5 Ton T|||MTHE1D|A|0000010",
  "B-35 Richmond|T-5 Ton T|||KM TruckM|V|1111111",
  "B-35 Richmond|T-5 Ton T|||KM TruckM|L|1111111",
  "B-35 Richmond|T-1 Ton|||KM Truck|I|1111111",
  "B-35 Richmond|T-1 Ton|||KM Truck|M|1111111",
  "B-35 Richmond|T-1 Ton|||KM Truck|K|1111111",
  "B-35 Richmond|T-1 Ton|||KM Truck|M|1111111",
  "B-35 Richmond|T-1 Ton|||KM Truck|Q|1111111",
  "B-35 Richmond|T-1 Ton|||KM Truck|I|1001010",
  "B-35 Richmond|T-1 Ton|||KM Truck|M|0110101",
  "B-35 Richmond|T-1 Ton|||KM Truck|E|1111111",
  "B-35 Richmond|*|||KM Truck|W|1111111",
  "||||||1111111"
];
const classes = ["Sport Coupe", "Sport GT Coupe", "Sport Utility", "Station Wagon", "T-1 Ton", "T-1-Ton PTG", "T-2 Ton", "T-5 Ton Railgate"];
const days = ["SUN", "MON", "TUE", "WED", "THU", "FRI", "SAT"];

const combo = `<td class="combo"><div class="edit"><input type="text" value="T-Cargo" aria-label="Vehicle class"><button aria-label="Open list"><svg class="dn"><use href="#i-down"/></svg></button></div>
<div class="list"><select size="8" aria-label="Vehicle classes">${classes.map(c => `<option${c === "T-1-Ton PTG" ? " selected" : ""}>${c}</option>`).join("")}</select>
<div class="bar"><button aria-label="Scroll up"><svg class="dn flip"><use href="#i-tri"/></svg></button><b></b><button aria-label="Scroll down"><svg class="dn"><use href="#i-tri"/></svg></button></div></div></td>`;

const marks = {
  15: '<svg viewBox="0 0 11 11"><path d="M3 0v10l5-5z"/></svg>',
  16: '<svg viewBox="0 0 11 11"><path d="M5.500 1v9M1 5.500h9M2 2l7 7M9 2L2 9" stroke="#000"/></svg>'
};

document.getElementById("rows").innerHTML = rates.map((line, i) => {
  const [loc, cls, pu, du, name, level, bits] = line.split("|");
  const box = (on, label) => `<td class="chk"><input type="checkbox" aria-label="${label}, row ${i + 1}"${on ? " checked" : ""}></td>`;
  return `<tr><td class="rh">${marks[i] || ""}</td><td>${loc}</td>` +
    (cls === "*" ? combo : `<td><span class="clip">${cls}</span></td>`) +
    `<td>${pu}</td><td>${du}</td><td>${name}</td><td>${level}</td>` +
    days.map((d, k) => box(bits[k] === "1", "P " + d)).join("") +
    days.map(d => box(true, "D " + d)).join("") +
    `<td class="num">1</td><td class="num">999</td></tr>`;
}).join("");
```
